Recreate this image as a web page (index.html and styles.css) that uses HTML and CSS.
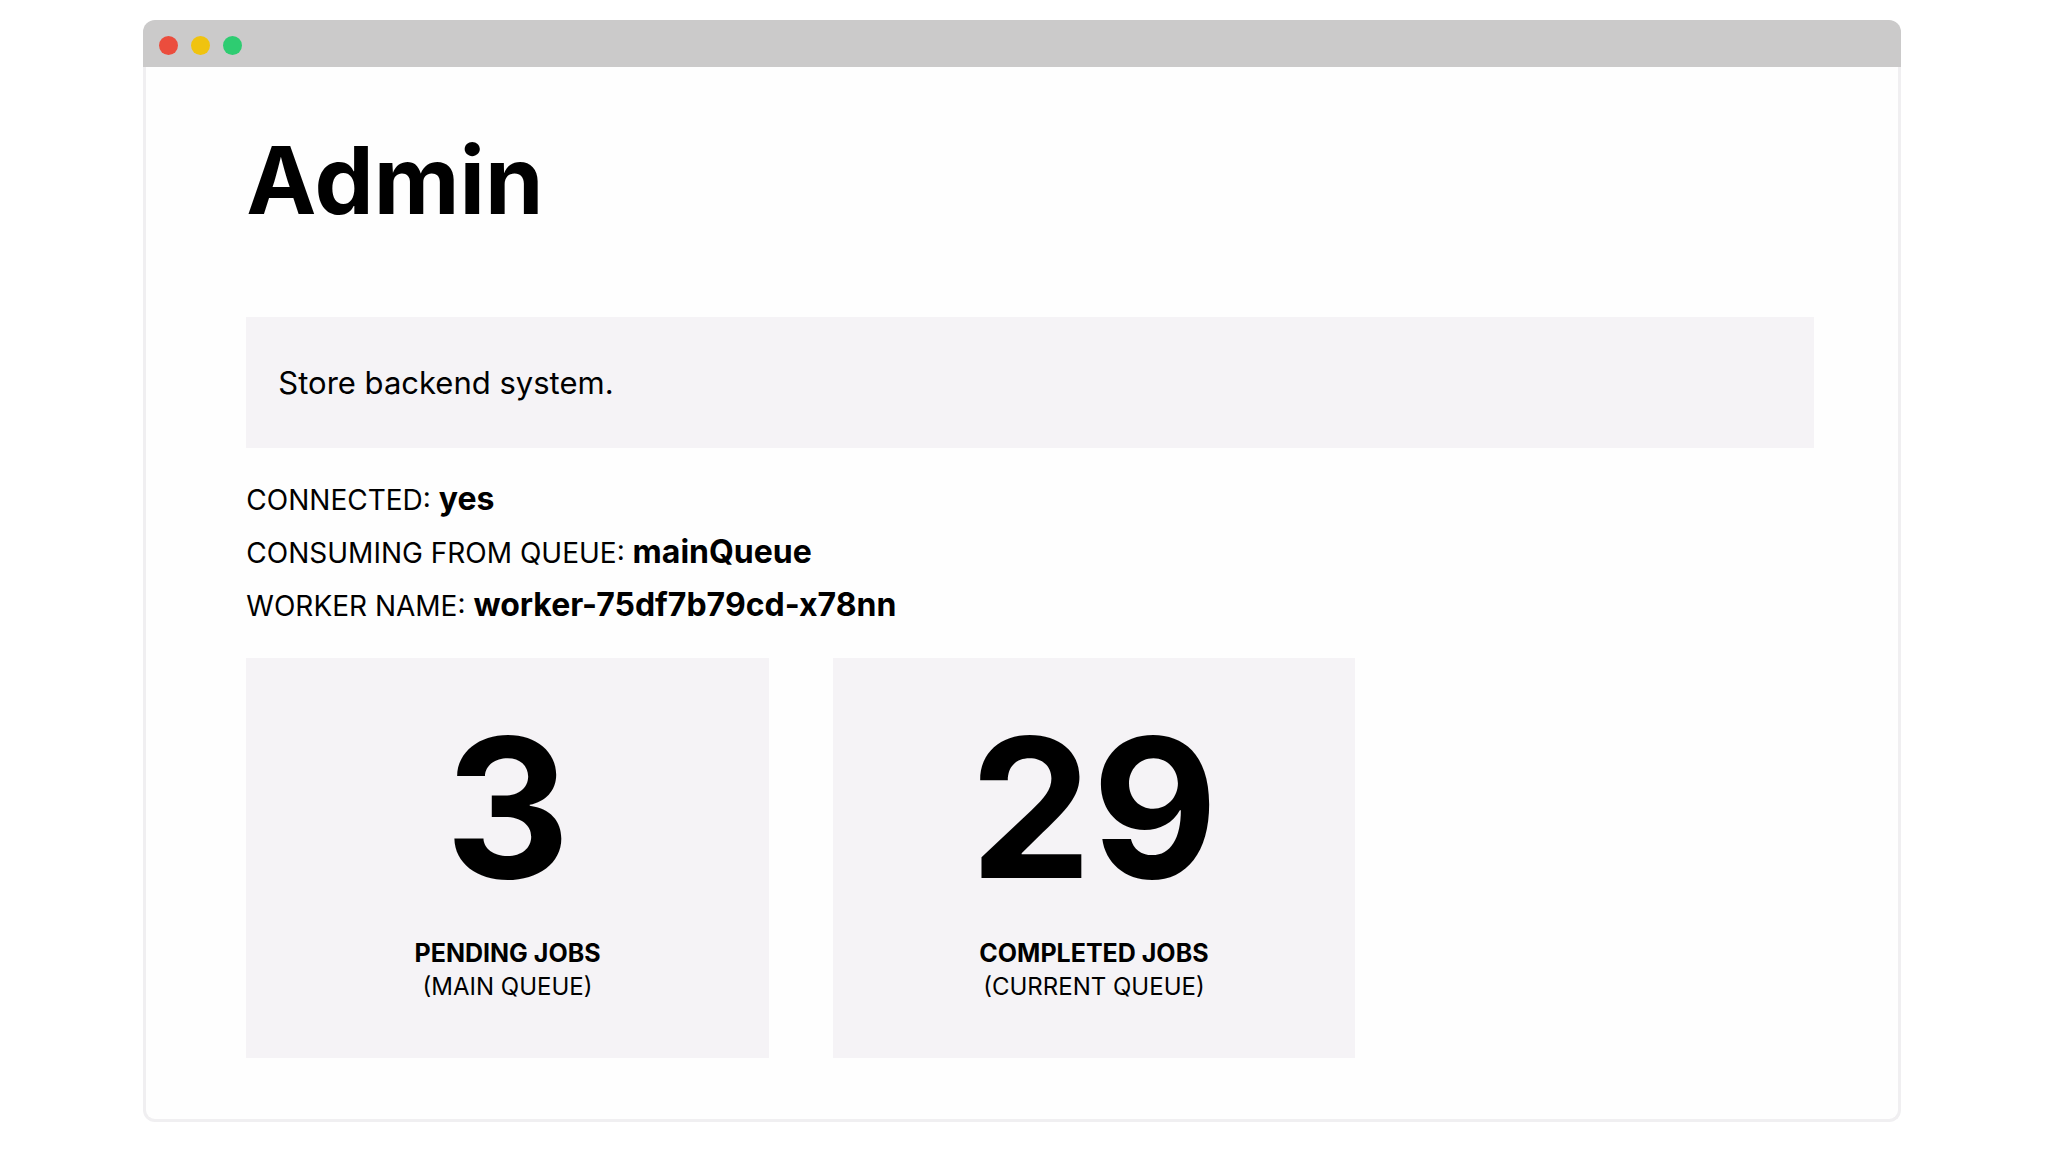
FILE: index.html
```
<!DOCTYPE html>
<html lang="en">
<head>
	<meta charset="UTF-8">
	<title>Admin</title>
	<link rel="stylesheet" href="styles.css">
</head>
<body>
	<div class="window">
		<div class="titlebar">
			<span class="dot red"></span>
			<span class="dot yellow"></span>
			<span class="dot green"></span>
		</div>
		<main class="content">
			<h1>Admin</h1>
			<p class="intro">Store backend system.</p>
			<ul class="status">
				<li>CONNECTED: <strong>yes</strong></li>
				<li>CONSUMING FROM QUEUE: <strong>mainQueue</strong></li>
				<li>WORKER NAME: <strong>worker-75df7b79cd-x78nn</strong></li>
			</ul>
			<div class="cards">
				<section class="card">
					<div class="number">3</div>
					<h2>PENDING JOBS</h2>
					<p>(MAIN QUEUE)</p>
				</section>
				<section class="card">
					<div class="number">29</div>
					<h2>COMPLETED JOBS</h2>
					<p>(CURRENT QUEUE)</p>
				</section>
			</div>
		</main>
	</div>
</body>
</html>
```

FILE: styles.css
```
*{box-sizing: border-box;}
body,h1,h2,p,ul{padding: 0;margin: 0;}
body{background-color: #fff;color: #000;font-family: Inter,"Liberation Sans",sans-serif;padding: 20px 7.2% 30px 7%;}
.titlebar{display: flex;align-items: center;gap: 13px;height: 47px;padding: 4px 16px 0;border-radius: 12px 12px 0 0;background-color: #cbcaca;}
.dot{width: 19px;height: 19px;border-radius: 50%;}
.red{background-color: #eb4d3d;}
.yellow{background-color: #f0c30f;}
.green{background-color: #2ecc71;}
.content{padding: 64px 84px 61px 100px;border: 3px solid #f0eff1;border-top: 0;border-radius: 0 0 12px 12px;background-color: #fefefe;}
h1{font-size: 94px;line-height: 98px;font-weight: 700;}
.intro{margin-top: 88px;padding: 32px;background-color: #f5f3f6;font-size: 31px;line-height: 67px;}
.status{margin-top: 26px;list-style-type: none;font-size: 28px;line-height: 53px;}
.status strong{font-size: 32px;line-height: 32px;}
.cards{display: flex;gap: 64px;margin-top: 25px;}
.card{width: 33.333%;background-color: #f5f3f6;text-align: center;padding: 50px 32px 54px;}
.number{font-size: 194px;line-height: 200px;font-weight: 700;}
.card h2{margin-top: 28px;font-size: 25px;line-height: 34px;}
.card p{font-size: 24px;line-height: 34px;}
```
